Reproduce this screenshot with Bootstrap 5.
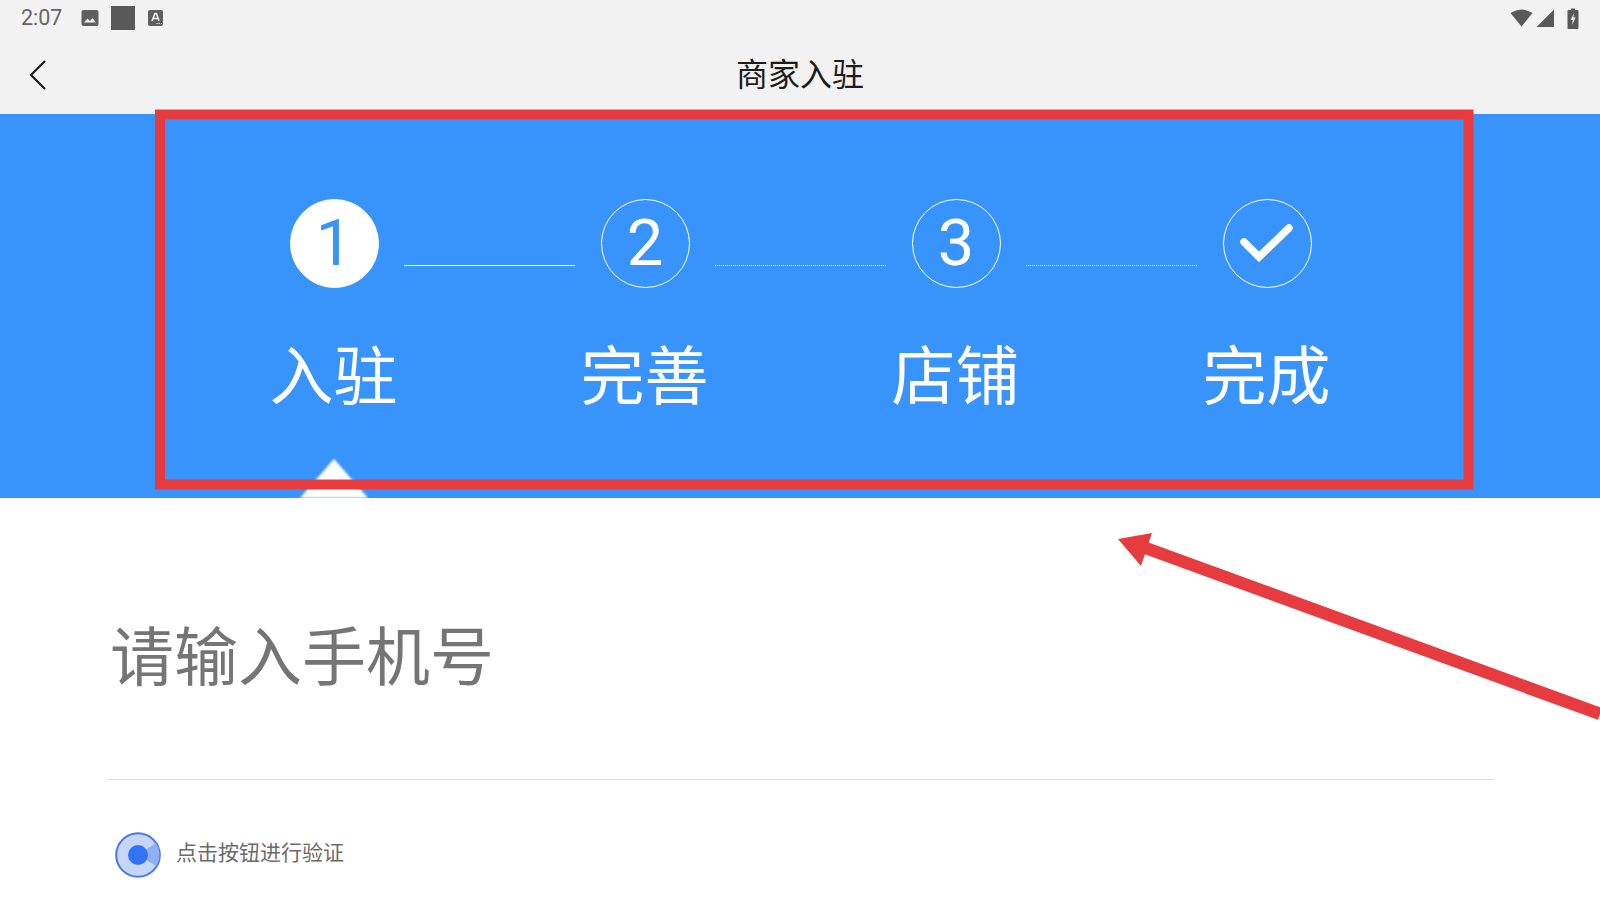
<!DOCTYPE html>
<html lang="zh-CN">

<head>
  <meta charset="UTF-8">
  <meta name="viewport" content="width=device-width, initial-scale=1.0">
  <title>商家入驻</title>

  <link href="https://cdn.jsdelivr.net/npm/bootstrap@5.3.0/dist/css/bootstrap.min.css" rel="stylesheet">
  <script src="https://cdn.jsdelivr.net/npm/bootstrap@5.3.0/dist/js/bootstrap.bundle.min.js"></script>

  <style>
    body {
      width: 1600px;
      height: 900px;
      overflow: hidden;
      background-color: #fff;
      font-family: "Noto Sans CJK SC", "Liberation Sans", sans-serif;
    }

    .top-area { background-color: #f2f2f2; height: 114px; }
    .status-bar { height: 36px; padding: 0 21px 0 21px; color: #666; }
    .status-time { font-family: Roboto, sans-serif; font-size: 21.5px; line-height: 38px; width: 60px; }
    .status-gap-a { margin-left: 12px; }
    .status-gap-b { margin-left: 12px; }
    .status-gap-c { margin-left: 3px; }
    .status-gap-d { margin-left: 12px; }
    .nav-bar { height: 78px; }
    .nav-side { flex: 1 1 0; padding-left: 29px; }
    .nav-title { font-size: 32px; color: #1c1c1c; line-height: 72px; height: 78px; }

    .hero { background-color: #3894fa; height: 384px; padding-top: 85px; }
    .step-track { height: 89px; gap: 25.5px; padding-left: 1px; }
    .step-circle {
      width: 89px;
      height: 89px;
      border: 1px solid #fff;
      border-radius: 50%;
      color: #fff;
      font-family: Roboto, sans-serif;
      font-size: 65px;
      line-height: 1;
    }
    .step-circle.is-current { background-color: #fff; color: #3894fa; }
    .step-line { width: 171px; margin-top: 66px; border-top: 1px dotted #fff; }
    .step-line.is-done { border-top-style: solid; }
    .step-labels { margin-top: 38px; }
    .step-label { width: 311px; color: #fff; font-size: 64px; line-height: 90px; text-align: center; }
    .hero-pointer { position: absolute; left: 300px; bottom: 0; filter: blur(1px); }
    .check-mark { filter: blur(.7px); }

    .form-area { padding: 109px 106px 0 107px; }
    .phone-title {
      font-size: 64px;
      line-height: 90px;
      color: #757575;
      padding: 0 0 0 3px;
      margin-bottom: 82px;
    }
    .phone-rule { border-top: 1px solid #dcdcdc; }
    .verify-row { margin-top: 51px; padding-left: 8px; gap: 15px; }
    .verify-text { font-size: 21px; line-height: 40px; height: 48px; color: #6b6b6b; }

    .annotation { position: absolute; left: 0; top: 0; pointer-events: none; }
  </style>
</head>

<body>
  <div class="top-area">
    <!-- Status bar -->
    <div class="status-bar d-flex align-items-center">
      <span class="status-time">2:07</span>
      <svg width="18" height="18" viewBox="0 0 18 18">
        <rect x="0.5" y="1" width="17" height="16" rx="2" fill="#5f5f5f" />
        <path d="M3 13.5 L6.5 9.5 L9 12 L11.5 9 L15 13.5 Z" fill="#f2f2f2" />
      </svg>
      <svg class="status-gap-a" width="24" height="24" viewBox="0 0 24 24">
        <rect width="24" height="24" fill="#595959" />
      </svg>
      <svg class="status-gap-b" width="17" height="18" viewBox="0 0 17 18">
        <rect x="1" y="1" width="15" height="16" rx="2" fill="#5f5f5f" />
        <path d="M5 12 L8 4.5 L9.5 4.5 L12 12 M6.2 9.5 H11" fill="none" stroke="#f2f2f2" stroke-width="1.6" />
        <path d="M9.5 14.5 H15" stroke="#f2f2f2" stroke-width="1.2" stroke-dasharray="1.2 1" />
      </svg>

      <div class="ms-auto d-flex align-items-center">
        <svg width="23" height="18" viewBox="0 0 23 18">
          <path d="M0.5 4 Q11.5 -3 22.5 4 L11.5 17.5 Z" fill="#595959" />
        </svg>
        <svg class="status-gap-c" width="19" height="19" viewBox="0 0 19 19">
          <path d="M0.5 18 L18 0.5 V18 Z" fill="#595959" />
        </svg>
        <svg class="status-gap-d" width="12" height="21" viewBox="0 0 12 21">
          <path d="M4 0.5 H8 V2 H10.5 Q11.5 2 11.5 3 V20 Q11.5 21 10.5 21 H1.5 Q0.5 21 0.5 20 V3 Q0.5 2 1.5 2 H4 Z" fill="#595959" />
          <path d="M7 5 L3.5 12 H5.8 L5 17 L8.7 9.5 H6.3 Z" fill="#f2f2f2" />
        </svg>
      </div>
    </div>

    <!-- Nav bar -->
    <div class="nav-bar d-flex align-items-center">
      <div class="nav-side">
        <svg class="d-block" width="18" height="30" viewBox="0 0 18 30">
          <path d="M16 1 L2 15 L16 29" fill="none" stroke="#1c1c1c" stroke-width="2.2" />
        </svg>
      </div>
      <div class="nav-title">商家入驻</div>
      <div class="nav-side"></div>
    </div>
  </div>

  <!-- Steps -->
  <div class="hero position-relative">
    <div class="step-track d-flex justify-content-center align-items-start">
      <div class="step-circle is-current d-flex align-items-center justify-content-center">1</div>
      <div class="step-line is-done"></div>
      <div class="step-circle d-flex align-items-center justify-content-center">2</div>
      <div class="step-line"></div>
      <div class="step-circle d-flex align-items-center justify-content-center">3</div>
      <div class="step-line"></div>
      <div class="step-circle d-flex align-items-center justify-content-center">
        <svg class="check-mark" width="58" height="42" viewBox="0 0 58 42">
          <path d="M6 19 L21 34 L51 5" fill="none" stroke="#fff" stroke-width="7.5" stroke-linecap="round" />
        </svg>
      </div>
    </div>
    <div class="step-labels d-flex justify-content-center">
      <div class="step-label">入驻</div>
      <div class="step-label">完善</div>
      <div class="step-label">店铺</div>
      <div class="step-label">完成</div>
    </div>
    <svg class="hero-pointer" width="68" height="39" viewBox="0 0 68 39">
      <path d="M34 0 L68 39 H0 Z" fill="#fff" />
    </svg>
  </div>

  <!-- Phone form -->
  <div class="form-area">
    <div class="phone-title">请输入手机号</div>
    <div class="phone-rule"></div>
    <div class="verify-row d-flex align-items-center">
      <svg width="46" height="46" viewBox="0 0 46 46">
        <circle cx="23" cy="23" r="21.8" fill="#c6d6f8" stroke="#4a78e6" stroke-width="2" />
        <path d="M23 23 L41 11 A21 21 0 0 1 41 34 Z" fill="#90aef2" />
        <circle cx="23" cy="23" r="10" fill="#3273f6" />
      </svg>
      <span class="verify-text">点击按钮进行验证</span>
    </div>
  </div>

  <!-- Red annotation -->
  <svg class="annotation" width="1600" height="900" viewBox="0 0 1600 900">
    <rect x="160" y="114.5" width="1308.5" height="370" fill="none" stroke="#e63c3f" stroke-width="10" />
    <path d="M1143 547 L1600 714" fill="none" stroke="#e63c3f" stroke-width="12.5" />
    <path d="M1118 539 L1152 533 L1141 566 Z" fill="#e63c3f" />
  </svg>
</body>

</html>
